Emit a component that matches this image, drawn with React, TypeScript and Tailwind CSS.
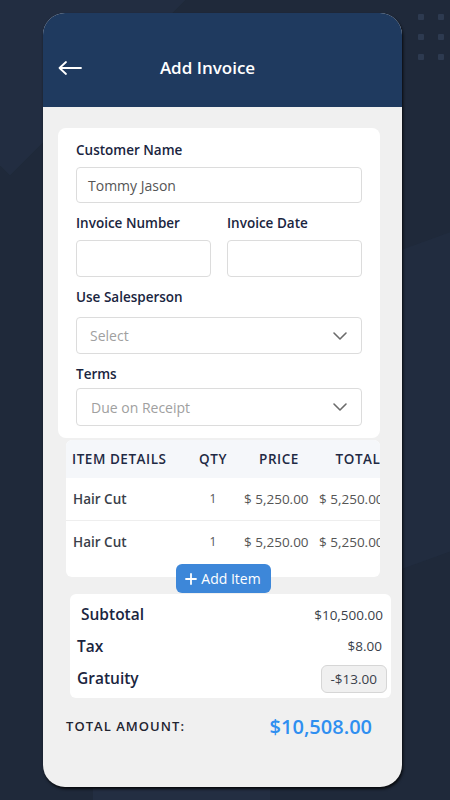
import React from "react";

const font = { fontFamily: '"Open Sans", "Noto Sans", sans-serif' };

function Chevron() {
  return (
    <svg width="16" height="10" viewBox="0 0 16 10" fill="none">
      <path d="M2 2 L8 8 L14 2" stroke="#6b6b6b" strokeWidth="1.6" strokeLinecap="round" strokeLinejoin="round" />
    </svg>
  );
}

function Row({ name }: { name: string }) {
  return (
    <div className="flex items-center h-[42px] bg-white text-[13.5px]">
      <div className="w-[120px] shrink-0 pl-[7px] text-[#3a3f4a] font-semibold">{name}</div>
      <div className="w-[54px] shrink-0 text-center text-[12px] text-[#555]">1</div>
      <div className="w-[78px] shrink-0 pl-[4px] text-[#555]">$ 5,250.00</div>
      <div className="w-[80px] shrink-0 pl-[1px] text-[#555] whitespace-nowrap">$ 5,250.00</div>
    </div>
  );
}

export default function App() {
  return (
    <div className="relative w-[450px] h-[800px] overflow-hidden bg-[#1f293a]" style={font}>
      {/* background decorations */}
      <div className="absolute left-[-220px] top-[-380px] w-[460px] h-[460px] rotate-45 bg-[#232f44] opacity-70" />
      <div className="absolute right-[-260px] top-[220px] w-[400px] h-[300px] -rotate-[20deg] bg-[#222d41] opacity-80" />
      <div className="absolute left-[93px] top-[788px] w-[177px] h-[20px] bg-[#232e42]" />
      <div className="absolute left-[418px] top-[-6px] grid grid-cols-2 gap-x-[14px] gap-y-[14px]">
        {Array.from({ length: 8 }).map((_, i) => (
          <div key={i} className="w-[6px] h-[6px] rounded-[1px] bg-[#2d3a50]" />
        ))}
      </div>

      {/* phone card */}
      <div className="relative ml-[43px] mt-[13px] w-[359px] h-[774px] rounded-[22px] overflow-hidden bg-[#f0f0f0] shadow-[1px_2px_3px_rgba(0,0,0,0.8)]">
        {/* header */}
        <div className="h-[94px] bg-[#1f3a5f] flex items-center pt-[15px] relative">
          <svg className="ml-[14px]" width="26" height="16" viewBox="0 0 26 16" fill="none">
            <path d="M24 8 H3 M9 2 L2.5 8 L9 14" stroke="white" strokeWidth="1.8" strokeLinecap="round" strokeLinejoin="round" />
          </svg>
          <div className="absolute left-0 right-0 top-[15px] bottom-0 flex items-center justify-center">
            <span className="text-white text-[17px] font-semibold mr-[30px]">Add Invoice</span>
          </div>
        </div>

        {/* form card */}
        <div className="ml-[15px] mt-[21px] w-[322px] bg-white rounded-[8px] px-[18px] pt-[12px] pb-[12px]">
          <div className="text-[13.5px] font-semibold text-[#1a2540] leading-[20px]">Customer Name</div>
          <div className="mt-[7px] h-[36px] border border-[#dcdcdc] rounded-[4px] flex items-center px-[11px] text-[14px] text-[#555]">
            Tommy Jason
          </div>
          <div className="mt-[10px] flex gap-[16px]">
            <div className="flex-1">
              <div className="text-[13.5px] font-semibold text-[#1a2540] leading-[20px]">Invoice Number</div>
              <div className="mt-[7px] h-[37px] border border-[#dcdcdc] rounded-[4px]" />
            </div>
            <div className="flex-1">
              <div className="text-[13.5px] font-semibold text-[#1a2540] leading-[20px]">Invoice Date</div>
              <div className="mt-[7px] h-[37px] border border-[#dcdcdc] rounded-[4px]" />
            </div>
          </div>
          <div className="mt-[10px] text-[13.5px] font-semibold text-[#1a2540] leading-[20px]">Use Salesperson</div>
          <div className="mt-[10px] h-[37px] border border-[#dcdcdc] rounded-[4px] flex items-center justify-between pl-[13px] pr-[13px] text-[14px] text-[#a0a0a0]">
            <span>Select</span>
            <Chevron />
          </div>
          <div className="mt-[10px] text-[13.5px] font-semibold text-[#1a2540] leading-[20px]">Terms</div>
          <div className="mt-[4px] h-[38px] border border-[#dcdcdc] rounded-[4px] flex items-center justify-between pl-[14px] pr-[13px] text-[14px] text-[#a0a0a0]">
            <span>Due on Receipt</span>
            <Chevron />
          </div>
        </div>

        {/* items table */}
        <div className="relative ml-[23px] mt-[2px] w-[314px]">
          <div className="overflow-hidden rounded-[6px] bg-white h-[137px]">
            <div className="flex items-center h-[38px] bg-[#f5f7fa] text-[13.5px] font-semibold text-[#1f2a44] tracking-[0.04em] whitespace-nowrap">
              <div className="w-[120px] shrink-0 pl-[6px]">ITEM DETAILS</div>
              <div className="w-[54px] shrink-0 text-center">QTY</div>
              <div className="w-[78px] shrink-0 text-center">PRICE</div>
              <div className="w-[80px] shrink-0 text-center">TOTAL</div>
            </div>
            <Row name="Hair Cut" />
            <div className="h-[1px] bg-[#eeeeee]" />
            <Row name="Hair Cut" />
          </div>
          <div className="absolute left-0 right-0 top-[124px] flex justify-center">
            <div className="h-[29px] w-[95px] rounded-[6px] bg-[#3d87d9] flex items-center justify-center gap-[4px] text-white text-[14px] font-medium">
              <svg width="12" height="12" viewBox="0 0 12 12" fill="none">
                <path d="M6 1 V11 M1 6 H11" stroke="white" strokeWidth="1.8" strokeLinecap="round" />
              </svg>
              <span>Add Item</span>
            </div>
          </div>
        </div>

        {/* summary */}
        <div className="ml-[27px] mt-[17px] w-[321px] h-[104px] bg-white rounded-[6px] pt-[6px] pr-[4px]">
          <div className="flex items-center justify-between h-[30px] pl-[11px] pr-[4px]">
            <span className="text-[15.5px] font-semibold text-[#1a2540]">Subtotal</span>
            <span className="text-[13.5px] text-[#3a3f4a]">$10,500.00</span>
          </div>
          <div className="flex items-center justify-between h-[33px] pl-[7px] pr-[5px]">
            <span className="text-[15.5px] font-semibold text-[#1a2540]">Tax</span>
            <span className="text-[13.5px] text-[#3a3f4a]">$8.00</span>
          </div>
          <div className="flex items-center justify-between h-[32px] pl-[7px]">
            <span className="text-[15.5px] font-semibold text-[#1a2540]">Gratuity</span>
            <span className="h-[28px] px-[9px] flex items-center rounded-[6px] bg-[#f0f0f0] border border-[#d6d6d6] text-[13.5px] text-[#3a3f4a]">-$13.00</span>
          </div>
        </div>

        {/* total */}
        <div className="flex items-center justify-between ml-[23px] mr-[30px] mt-[15px] h-[28px]">
          <span className="text-[13px] font-semibold tracking-[0.08em] text-[#1f2430]">TOTAL AMOUNT:</span>
          <span className="text-[20px] font-semibold text-[#2f8ff0]">$10,508.00</span>
        </div>
      </div>
    </div>
  );
}
